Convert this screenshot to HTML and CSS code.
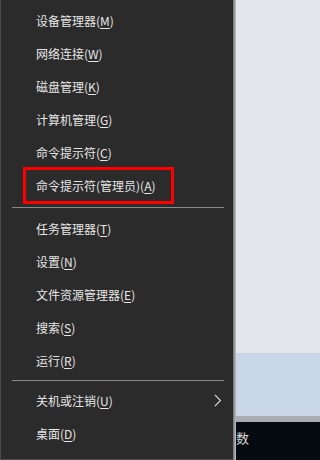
FILE: index.html
```html
<!DOCTYPE html>
<html lang="zh-CN">
<head>
<meta charset="utf-8">
<link rel="stylesheet" href="styles.css">
</head>
<body>
<div class="screen">
  <div class="menu">
    <div class="group first">
      <div class="item">设备管理器(<u>M</u>)</div>
      <div class="item">网络连接(<u>W</u>)</div>
      <div class="item">磁盘管理(<u>K</u>)</div>
      <div class="item">计算机管理(<u>G</u>)</div>
      <div class="item">命令提示符(<u>C</u>)</div>
      <div class="item">命令提示符(管理员)(<u>A</u>)</div>
    </div>
    <div class="sep sep1"></div>
    <div class="group">
      <div class="item">任务管理器(<u>T</u>)</div>
      <div class="item">设置(<u>N</u>)</div>
      <div class="item">文件资源管理器(<u>E</u>)</div>
      <div class="item">搜索(<u>S</u>)</div>
      <div class="item">运行(<u>R</u>)</div>
    </div>
    <div class="sep sep2"></div>
    <div class="group">
      <div class="item sub">关机或注销(<u>U</u>)
        <svg class="chev" width="8" height="13" viewBox="0 0 8 13"><path d="M1 1 L6.5 6.5 L1 12" fill="none" stroke="#d8d8d8" stroke-width="1.1"/></svg>
      </div>
      <div class="item">桌面(<u>D</u>)</div>
    </div>
    <div class="highlight"></div>
  </div>
  <div class="edge"></div>
  <div class="backdrop">
    <div class="bg-light"></div>
    <div class="bg-blue"></div>
    <div class="bg-gray"></div>
    <div class="bg-dark"><span class="tb-char">数</span></div>
  </div>
</div>
</body>
</html>
```

FILE: styles.css
```css
html, body {
  margin: 0;
  padding: 0;
  background: #e3e7eb;
}
.screen {
  width: 100%;
  min-width: 243px;
  height: 460px;
  display: flex;
  overflow: hidden;
  font-family: "Noto Sans CJK SC", "Noto Sans", sans-serif;
  font-size: 12px;
}
.menu {
  position: relative;
  width: 232px;
  height: 459px;
  background: #2b2b2b;
  border-left: 1px solid #4a4a4a;
  border-bottom: 1px solid #4a4a4a;
  flex: none;
}
.group.first {
  padding-top: 4px;
}
.item {
  height: 33px;
  line-height: 33px;
  padding-left: 35px;
  color: #e6e6e6;
  white-space: nowrap;
  position: relative;
}
.item u {
  text-decoration: underline;
  text-underline-offset: 2px;
  text-decoration-thickness: 1px;
}
.sep {
  height: 1px;
  background: #8a8a8a;
  margin-left: 11px;
  margin-right: 9px;
}
.sep1 {
  margin-top: 5px;
  margin-bottom: 4px;
}
.sep2 {
  margin-top: 3px;
  margin-bottom: 3px;
}
.chev {
  position: absolute;
  right: 11px;
  top: 10px;
}
.highlight {
  position: absolute;
  left: 22px;
  top: 167px;
  width: 145px;
  height: 31px;
  border: 3px solid #ff0000;
}
.edge {
  width: 3px;
  height: 460px;
  flex: none;
  background: linear-gradient(to right, #6e6e6e, #9a9a9a, #bfc3c6);
}
.backdrop {
  flex: 1;
  display: flex;
  flex-direction: column;
  height: 460px;
}
.bg-light {
  height: 353px;
  background: #e3e7eb;
}
.bg-blue {
  height: 63px;
  background: #c9d6e6;
}
.bg-gray {
  height: 6px;
  background: #a9adb1;
}
.bg-dark {
  flex: 1;
  background: #060b12;
  position: relative;
  overflow: hidden;
}
.tb-char {
  position: absolute;
  left: 0;
  top: 9px;
  color: #d8d8d8;
  font-size: 13px;
  line-height: 14px;
}
```
